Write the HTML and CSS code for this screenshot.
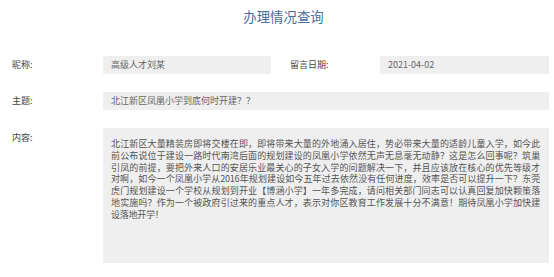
FILE: index.html
```html
<!DOCTYPE html>
<html lang="zh">
<head>
<meta charset="utf-8">
<title>办理情况查询</title>
<link rel="stylesheet" href="styles.css">
</head>
<body>
<div class="page">
  <h1 class="title">办理情况查询</h1>
  <div class="row">
    <div class="label">昵称:</div>
    <div class="field field-short">高级人才刘某</div>
    <div class="label label-second">留言日期:</div>
    <div class="field field-grow">2021-04-02</div>
  </div>
  <div class="row">
    <div class="label">主题:</div>
    <div class="field field-grow">北江新区凤凰小学到底何时开建？？</div>
  </div>
  <div class="row row-top">
    <div class="label label-top">内容:</div>
    <div class="content">
      <p class="line">北江新区大量精装房即将交楼在即，即将带来大量的外地涌入居住，势必带来大量的适龄儿童入学，如今此</p>
      <p class="line">前公布说位于建设一路时代南湾后面的规划建设的凤凰小学依然无声无息毫无动静？这是怎么回事呢？筑巢</p>
      <p class="line">引凤的前提，要把外来人口的安居乐业最关心的子女入学的问题解决一下，并且应该放在核心的优先等级才</p>
      <p class="line">对啊，如今一个凤凰小学从2016年规划建设如今五年过去依然没有任何进度，效率是否可以提升一下？东莞</p>
      <p class="line">虎门规划建设一个学校从规划到开业【博涵小学】一年多完成，请问相关部门同志可以认真回复加快颗策落</p>
      <p class="line">地实施吗？作为一个被政府引过来的重点人才，表示对你区教育工作发展十分不满意！期待凤凰小学加快建</p>
      <p class="line line-last">设落地开学！</p>
    </div>
  </div>
</div>
</body>
</html>
```
FILE: styles.css
```css
* { box-sizing: border-box; }
html, body {
  margin: 0;
  padding: 0;
  background: #ffffff;
}
body {
  font-family: "Noto Sans CJK SC", "Noto Sans", sans-serif;
  color: #444;
}
.page {
  padding: 0 5px 0 12px;
}
.title {
  margin: 0;
  height: 32px;
  line-height: 32px;
  padding-left: 6px;
  font-size: 13.4px;
  font-weight: normal;
  color: #4a6c9c;
  text-align: center;
}
.row {
  display: flex;
  align-items: center;
  margin-top: 18px;
}
.title + .row { margin-top: 24px; }
.label {
  width: 91px;
  flex: none;
  font-size: 9px;
  line-height: 12px;
  color: #444;
}
.label-second {
  margin-left: 19px;
  width: 90px;
}
.field {
  height: 18px;
  line-height: 18px;
  background: #efefef;
  padding-left: 8px;
  font-size: 9px;
  color: #666;
  white-space: nowrap;
}
.field-short {
  width: 168px;
  flex: none;
}
.field-grow {
  flex: 1;
}
.row-top {
  align-items: flex-start;
}
.label-top {
  padding-top: 4px;
}
.content {
  flex: 1;
  height: 135px;
  background: #efefef;
  padding: 10px 9px 0 8px;
  font-size: 9px;
  letter-spacing: -0.25px;
  line-height: 11.8px;
  color: #555;
  overflow: hidden;
}
.line {
  margin: 0;
  height: 11.8px;
  text-align: justify;
  text-align-last: justify;
  text-justify: inter-character;
}
.line-last {
  text-align-last: left;
}
```
